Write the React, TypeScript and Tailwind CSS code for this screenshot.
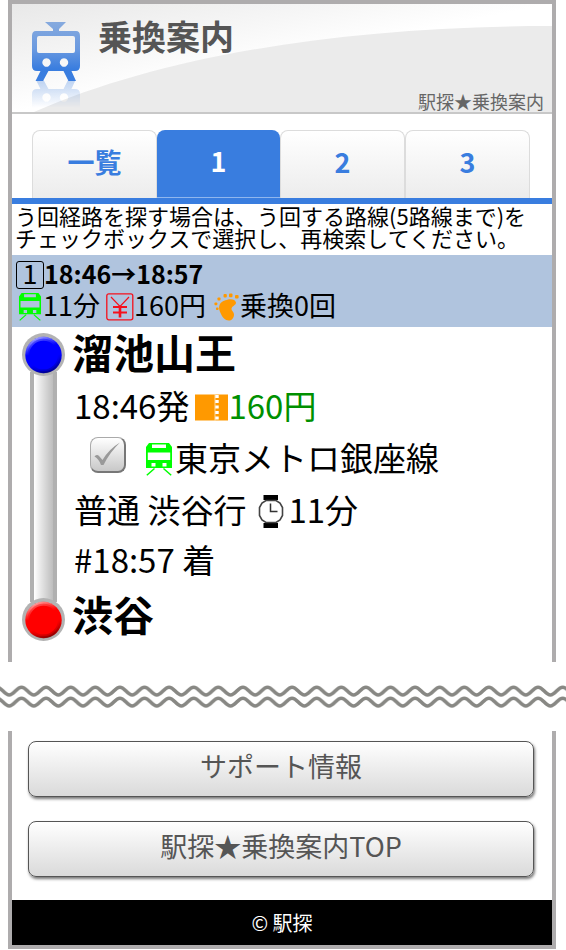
import React, { useState } from 'react';

const tabs = ['一覧', '1', '2', '3'];

const HeaderTrain = () => (
  <svg viewBox="31 21 50 88" className="h-[88px] w-[50px] shrink-0" aria-hidden="true">
    <defs>
      <linearGradient id="trainFill" gradientUnits="userSpaceOnUse" x1="0" y1="22" x2="0" y2="81">
        <stop offset="0" stopColor="#86aade" />
        <stop offset="0.45" stopColor="#6b9ae0" />
        <stop offset="0.8" stopColor="#397ddf" />
        <stop offset="1" stopColor="#3b7ee0" />
      </linearGradient>
      <linearGradient id="reflectFade" gradientUnits="userSpaceOnUse" x1="0" y1="80" x2="0" y2="108">
        <stop offset="0" stopColor="#fff" stopOpacity="0.32" />
        <stop offset="1" stopColor="#fff" stopOpacity="0" />
      </linearGradient>
      <mask id="reflectMask" maskUnits="userSpaceOnUse" x="31" y="80" width="50" height="28">
        <rect x="31" y="80" width="50" height="28" fill="url(#reflectFade)" />
      </mask>
      <g id="train">
        <path d="M45 22H66L59 29V32H53V29Z" />
        <path
          fillRule="evenodd"
          d="M36 31H76Q80 31 80 36V66Q80 71 75 71H37Q32 71 32 66V36Q32 31 36 31ZM39 36Q37 36 37 38V51Q37 53 39 53H73Q75 53 75 51V38Q75 36 73 36ZM46.5 58.3a4.2 4.2 0 1 0 .01 0ZM64 58.3a4.2 4.2 0 1 0 .01 0Z"
        />
        <path d="M41 70H49L43 81H35.500ZM63 70H71L76 81H68.500Z" />
      </g>
    </defs>
    <use href="#train" fill="url(#trainFill)" />
    <g mask="url(#reflectMask)">
      <use href="#train" fill="#3b7ee0" transform="matrix(1 0 0 -1 0 160)" />
    </g>
  </svg>
);

const TrainIcon = ({ className }: { className: string }) => (
  <svg viewBox="0 0 26 33" className={className} aria-hidden="true">
    <path
      fill="#00ff00"
      fillRule="evenodd"
      d="M3 0H23L26 4V25H0V4ZM6 1.500V5H20V1.500ZM1.800 9.500V17H24.200V9.500ZM5.500 20V23.500H9.500V20ZM16.500 20V23.500H20.500V20Z"
    />
    <path d="M8.500 25.500L.8 32.300M17.500 25.500L25.200 32.300" stroke="#00ff00" strokeWidth="1.500" />
  </svg>
);

const YenIcon = () => (
  <svg viewBox="0 0 28 28" className="size-7" fill="none" stroke="#f5101c" aria-hidden="true">
    <rect x="0.8" y="0.8" width="26" height="26" rx="2" strokeWidth="1.300" />
    <path d="M5 4L14 13.500L23 4" strokeWidth="1.200" />
    <path d="M7 14H21M7 19.500H21" strokeWidth="1.800" />
    <path d="M14 12.500V24.500" strokeWidth="2.600" />
  </svg>
);

const FootIcon = () => (
  <svg viewBox="0 0 26 28" className="h-7 w-[26px]" fill="#ff9900" aria-hidden="true">
    <path d="M14 6.500C17.500 5.500 21.500 6.500 22 9.500C22.300 12 18 13 17.500 15.500C17.300 18 20.300 19 20 22C19.700 25.500 17.500 27.500 14.800 27.500C11 27.500 8.500 24.500 7 21C5.500 18 4.300 15 5.500 12C7 8.500 10.500 7.500 14 6.500Z" />
    <rect x="2" y="14.500" width="2.500" height="2.500" rx="0.800" />
    <rect x="0.500" y="9.500" width="2.800" height="2.800" rx="0.800" />
    <rect x="3.500" y="4.500" width="3" height="3" rx="0.800" />
    <rect x="9.500" y="1" width="3.300" height="3.500" rx="1" />
    <rect x="15" y="0.500" width="3.500" height="3.800" rx="1" />
    <rect x="21" y="2" width="3.600" height="3.500" rx="1" />
  </svg>
);

const TicketIcon = () => (
  <svg viewBox="0 0 33 27" className="h-[27px] w-[33px]" aria-hidden="true">
    <rect y="0.5" width="33" height="26" fill="#ff9900" />
    <path d="M20.300 1H23.700V4H20.300ZM20.300 6H23.700V9H20.300ZM20.300 11.500H23.700V14.500H20.300ZM20.300 17H23.700V20H20.300ZM20.300 22.500H23.700V25.500H20.300Z" fill="#fff" />
    <path d="M20 0.500V26.500" stroke="#fff" strokeWidth="0.6" />
  </svg>
);

const WatchIcon = () => (
  <svg viewBox="0 0 26 33" className="h-[33px] w-[26px]" fill="none" aria-hidden="true">
    <path d="M5.500 0H20V5H5.500ZM5.500 28H20V33H5.500Z" fill="#000" />
    <path d="M8 5.500H18L22 8L24.500 12.500V20.500L22 25L18 27.500H8L4 25L1.500 20.500V12.500L4 8Z" fill="#fff" stroke="#444" strokeWidth="1.600" />
    <path d="M12.500 8.500V16.500H19.500" stroke="#333" strokeWidth="1.500" />
  </svg>
);

const StationDot = ({ color, id }: { color: string; id: string }) => (
  <svg viewBox="0 0 42 42" className="relative z-10 size-[43px] shrink-0" aria-hidden="true">
    <defs>
      <linearGradient id={`${id}Edge`} x1="0.3" y1="0" x2="0.7" y2="1">
        <stop offset="0" stopColor="#fff" stopOpacity="0.6" />
        <stop offset="0.35" stopColor="#fff" stopOpacity="0" />
        <stop offset="0.65" stopColor="#000" stopOpacity="0" />
        <stop offset="1" stopColor="#000" stopOpacity="0.45" />
      </linearGradient>
    </defs>
    <circle cx="21" cy="21" r="21" fill="#b3b3b3" />
    <circle cx="21" cy="21.500" r="17.800" fill={color} />
    <circle cx="21" cy="21.500" r="16.800" fill="none" stroke={`url(#${id}Edge)`} strokeWidth="2" />
    <circle cx="21" cy="21.500" r="15" fill="none" stroke={`url(#${id}Edge)`} strokeWidth="2" opacity="0.5" />
  </svg>
);

const WaveBreak = () => (
  <svg className="my-[22px] block h-[25px] w-full" aria-hidden="true">
    <defs>
      <pattern id="waves" patternUnits="userSpaceOnUse" x="-3.100" y="0" width="24.600" height="25">
        <g fill="none" stroke="#888884" strokeWidth="3.600">
          <path d="M-12.300 11C-7.500 11 -4.800 3.200 0 3.200S7.500 11 12.300 11S19.800 3.200 24.600 3.200S32 11 36.900 11" />
          <path d="M-12.300 22C-7.500 22 -4.800 14.200 0 14.200S7.500 22 12.300 22S19.800 14.200 24.600 14.200S32 22 36.900 22" />
        </g>
      </pattern>
    </defs>
    <rect width="100%" height="100%" fill="url(#waves)" />
  </svg>
);

const Header = () => (
  <header className="relative h-[110px] border-b-2 border-[#c8c8c8] bg-linear-to-br from-[#e8e8e8] to-white to-50%">
    <svg viewBox="0 0 540 108" preserveAspectRatio="none" className="absolute inset-0 h-full w-full" aria-hidden="true">
      <path d="M22 108C150 52 330 22 540 22V108Z" fill="#ebebeb" />
    </svg>
    <div className="relative flex h-full pt-[17px] pl-[19px]">
      <HeaderTrain />
      <h1 className="ml-[17px] text-[34px] leading-[30px] font-bold text-[#555]">乗換案内</h1>
      <p className="mr-2 ml-auto self-end text-lg leading-[22px] text-[#666]">駅探★乗換案内</p>
    </div>
  </header>
);

const LinkButton = ({ children }: { children: React.ReactNode }) => (
  <button
    type="button"
    className="h-14 w-full rounded-lg border border-[#555] bg-linear-to-b from-white to-[#dadada] pb-1.5 text-[27px] leading-8 text-[#555] shadow-[1px_2px_3px_#777]"
  >
    {children}
  </button>
);

const App: React.FC = () => {
  const [activeTab, setActiveTab] = useState('1');
  const [selected, setSelected] = useState(false);

  return (
    <div className="bg-white font-['Noto_Sans_CJK_JP',sans-serif] text-black">
      <div className="mr-[10px] ml-2 border-x-4 border-t-4 border-[#aeacad] pb-[21px]">
        <Header />

        <nav className="flex border-b-[6px] border-[#397ddf] pt-4 pr-[22px] pl-5">
          {tabs.map((tab) => (
            <button
              key={tab}
              type="button"
              onClick={() => setActiveTab(tab)}
              className={`h-[68px] flex-1 basis-0 rounded-t-lg pb-1 text-[27px] font-bold ${
                activeTab === tab
                  ? 'border-b border-[#8fb6ee] bg-[#397ddf] text-white'
                  : 'border border-b-0 border-[#dcdcdc] bg-linear-to-b from-white to-[#ececec] text-[#397ddf]'
              }`}
            >
              {tab}
            </button>
          ))}
        </nav>

        <p className="px-[3px] pb-[7px] text-[22px] leading-[22px]">
          う回経路を探す場合は、う回する路線(5路線まで)を
          <br />
          チェックボックスで選択し、再検索してください。
        </p>

        <section className="bg-[#b0c4de] pt-1 pb-1 pl-1">
          <div className="flex h-8 items-center">
            <span className="flex size-7 items-center justify-center rounded-[3px] border border-black pb-1 text-[27px] leading-6">1</span>
            <span className="pb-1 text-[25px] leading-7 font-bold">18:46→18:57</span>
          </div>
          <div className="flex h-8 items-center text-[27px] leading-7">
            <TrainIcon className="ml-[3px] h-7 w-[22px]" />
            <span className="mr-1.5 ml-0.5 pb-1">11分</span>
            <YenIcon />
            <span className="mr-2 pb-1">160円</span>
            <FootIcon />
            <span className="pb-1">乗換0回</span>
          </div>
        </section>

        <section className="flex">
          <div className="mr-[7px] ml-[10px] flex flex-col items-center pt-1.5">
            <StationDot color="#0000ff" id="depart" />
            <div className="-my-1 w-[27px] flex-1 border-x-4 border-[#b0b0b0] bg-linear-to-r from-white to-[#bdbdbd]" />
            <StationDot color="#ff0000" id="arrive" />
          </div>
          <div className="flex-1 pt-0.5 text-[33px] leading-10 *:flex *:h-[52px] *:items-center">
            <h2 className="pb-2 text-[41px] font-bold">溜池山王</h2>
            <div className="pl-0.5">
              <span className="mr-1.5 pb-1">18:46発</span>
              <TicketIcon />
              <span className="pb-1 text-[#009000]">160円</span>
            </div>
            <div className="pl-[18px]">
              <label className="mr-5 grid size-9 shrink-0 -mt-2 *:col-start-1 *:row-start-1">
                <input
                  type="checkbox"
                  aria-label="東京メトロ銀座線"
                  checked={selected}
                  onChange={(e) => setSelected(e.target.checked)}
                  className="size-9 appearance-none rounded-lg border border-r-2 border-b-2 border-[#aaa] border-r-[#777] border-b-[#777] bg-linear-to-b from-white to-[#c8c8c8]"
                />
                <svg viewBox="0 0 36 36" className="pointer-events-none size-9" aria-hidden="true">
                  <path d="M4.500 19.500Q7 17 9 19L12.500 23Q19 12 30 5.500Q20 15 13.500 28H11Q9 22 4.500 19.500Z" fill={selected ? '#397ddf' : '#999'} />
                </svg>
              </label>
              <TrainIcon className="mr-[3px] h-[33px] w-[26px]" />
              <span className="pb-1">東京メトロ銀座線</span>
            </div>
            <div className="pl-0.5">
              <span className="mr-3 pb-1">普通 渋谷行</span>
              <WatchIcon />
              <span className="ml-1 pb-1">11分</span>
            </div>
            <div className="pb-2 pl-0.5">#18:57 着</div>
            <h2 className="pb-1 text-[41px] font-bold">渋谷</h2>
          </div>
        </section>
      </div>

      <WaveBreak />

      <div className="mr-[10px] ml-2 border-x-4 border-b-4 border-[#aeacad]">
        <div className="space-y-6 pt-2.5 pr-[18px] pb-[23px] pl-4">
          <LinkButton>サポート情報</LinkButton>
          <LinkButton>駅探★乗換案内TOP</LinkButton>
        </div>
        <footer className="bg-black text-center text-xl leading-[45px] text-white">© 駅探</footer>
      </div>
    </div>
  );
};

export default App;
